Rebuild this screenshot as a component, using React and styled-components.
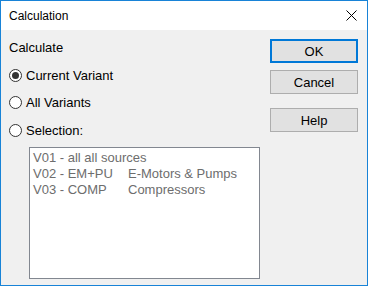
import React from 'react';
import styled, { createGlobalStyle } from 'styled-components';

const GlobalStyle = createGlobalStyle`
  html, body {
    margin: 0;
    padding: 0;
    background: #ffffff;
  }
  body {
    font-family: "Liberation Sans", Arial, sans-serif;
  }
`;

const Window = styled.div`
  box-sizing: border-box;
  width: 368px;
  height: 286px;
  border: 1px solid #1883d7;
  background: #f0f0f0;
  display: flex;
  flex-direction: column;
`;

const TitleBar = styled.div`
  height: 29px;
  flex: none;
  background: #ffffff;
  display: flex;
  align-items: center;
  justify-content: space-between;
  padding: 0 9px 0 8px;
  font-size: 12px;
  color: #000000;
`;

const CloseIcon = styled.svg`
  width: 11px;
  height: 11px;
  margin-right: 1px;
`;

const Body = styled.div`
  flex: 1;
  display: flex;
  padding: 4px 9px 0 8px;
`;

const LeftColumn = styled.div`
  flex: 1;
  display: flex;
  flex-direction: column;
  font-size: 13px;
  color: #000000;
`;

const Row = styled.div`
  height: 27.5px;
  display: flex;
  align-items: center;
  gap: 4px;
`;

const Radio = styled.span`
  box-sizing: border-box;
  width: 13px;
  height: 13px;
  border-radius: 50%;
  border: 1px solid #333333;
  background: #ffffff;
  display: flex;
  align-items: center;
  justify-content: center;

  &::after {
    content: '';
    width: 7px;
    height: 7px;
    border-radius: 50%;
    background: ${({ $checked }) => ($checked ? '#333333' : 'transparent')};
  }
`;

const ListBox = styled.div`
  box-sizing: border-box;
  margin: 3px 0 0 20px;
  width: 231px;
  height: 132px;
  border: 1px solid #828790;
  background: #ffffff;
  padding: 2px 3px;
  color: #6d6d6d;
  font-size: 13px;
  line-height: 16px;
`;

const ListItem = styled.div`
  display: flex;
  white-space: nowrap;
`;

const Code = styled.span`
  min-width: 95px;
  flex: none;
`;

const ButtonColumn = styled.div`
  width: 88px;
  display: flex;
  flex-direction: column;
  padding-top: 1px;
`;

const Button = styled.button`
  box-sizing: border-box;
  height: 24px;
  margin-top: ${({ $gap }) => $gap}px;
  background: #e1e1e1;
  border: ${({ $default }) => ($default ? '2px solid #0078d7' : '1px solid #adadad')};
  font-family: "Liberation Sans", Arial, sans-serif;
  font-size: 13px;
  color: #000000;
  padding: 0;
`;

const variants = [
  ['V01 - all all sources', ''],
  ['V02 - EM+PU', 'E-Motors & Pumps'],
  ['V03 - COMP', 'Compressors'],
];

export default function App() {
  return (
    <>
      <GlobalStyle />
      <Window>
        <TitleBar>
          <span>Calculation</span>
          <CloseIcon viewBox="0 0 11 11">
            <path d="M0.5 0.5 L10.5 10.5 M10.5 0.5 L0.5 10.5" stroke="#000" strokeWidth="1" fill="none" />
          </CloseIcon>
        </TitleBar>
        <Body>
          <LeftColumn>
            <Row>Calculate</Row>
            <Row>
              <Radio $checked />
              Current Variant
            </Row>
            <Row>
              <Radio />
              All Variants
            </Row>
            <Row>
              <Radio />
              Selection:
            </Row>
            <ListBox>
              {variants.map(([code, name]) => (
                <ListItem key={code}>
                  <Code>{code}</Code>
                  <span>{name}</span>
                </ListItem>
              ))}
            </ListBox>
          </LeftColumn>
          <ButtonColumn>
            <Button $default $gap={4}>OK</Button>
            <Button $gap={7}>Cancel</Button>
            <Button $gap={14}>Help</Button>
          </ButtonColumn>
        </Body>
      </Window>
    </>
  );
}
